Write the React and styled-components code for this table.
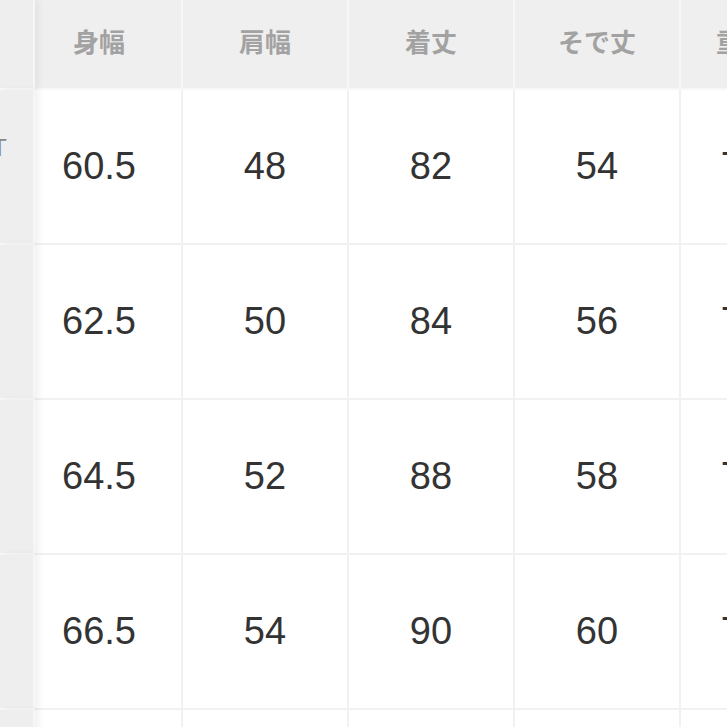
import React from 'react'
import styled, {createGlobalStyle} from 'styled-components'

const GlobalStyle = createGlobalStyle`
  html, body {
    margin: 0;
    padding: 0;
    background: #fff;
  }
  body {
    font-family: "Liberation Sans", "Noto Sans CJK JP", sans-serif;
  }
`

const columns = ['身幅', '肩幅', '着丈', 'そで丈', '重量']

const rows = [
  {label: 'T', values: ['60.5', '48', '82', '54', '72']},
  {label: '', values: ['62.5', '50', '84', '56', '74']},
  {label: '', values: ['64.5', '52', '88', '58', '76']},
  {label: '', values: ['66.5', '54', '90', '60', '78']},
  {label: '', values: ['', '', '', '', '']},
]

const App = () => {
  return (
    <>
      <GlobalStyle />
      <Frame>
        <Table>
          <SideHead />
          {columns.map((c, i) => (
            <HeadCell key={c} first={i === 0}>{c}</HeadCell>
          ))}
          {rows.map((r, ri) => (
            <React.Fragment key={ri}>
              <SideCell>{r.label && <SideLabel>{r.label}</SideLabel>}</SideCell>
              {r.values.map((v, i) => (
                <Cell key={i} first={i === 0}>{v}</Cell>
              ))}
            </React.Fragment>
          ))}
        </Table>
      </Frame>
    </>
  )
}

export default App


const Frame = styled.div`
  width: 727px;
  height: 727px;
  overflow: hidden;
  background: #fff;
`

const Table = styled.div`
  display: grid;
  grid-template-columns: 35px 148px 166px 166px 166px 124px;
  grid-template-rows: 90px repeat(5, 155px);
`

const SideHead = styled.div`
  position: relative;
  z-index: 2;
  background: #eeeeee;
  border-right: 2px solid #f6f6f6;
  border-bottom: 2px solid #f7f7f7;
  box-shadow: 4px 0 7px rgba(0, 0, 0, 0.05);
`

const SideCell = styled.div`
  position: relative;
  z-index: 2;
  background: #eeeeee;
  border-right: 2px solid #f6f6f6;
  border-bottom: 2px solid #f7f7f7;
  box-shadow: 4px 0 7px rgba(0, 0, 0, 0.06);
  display: flex;
  align-items: center;
  justify-content: flex-end;
  overflow: hidden;
  padding-right: 26px;
`

const SideLabel = styled.span`
  font-family: "Liberation Sans", sans-serif;
  font-size: 24px;
  color: #8a8a8a;
  margin-bottom: 38px;
  white-space: nowrap;
`

const HeadCell = styled.div`
  background: #efefef;
  border-right: 2px solid #f7f7f7;
  border-bottom: 2px solid #f7f7f7;
  display: flex;
  align-items: center;
  justify-content: center;
  padding-right: ${p => (p.first ? '18px' : '0')};
  padding-bottom: 8px;
  font-family: "Noto Sans CJK JP", sans-serif;
  font-weight: 700;
  font-size: 26px;
  color: #a2a2a2;
  white-space: nowrap;
  overflow: hidden;
`

const Cell = styled.div`
  background: #fff;
  border-right: 2px solid #f1f1f1;
  border-bottom: 2px solid #f1f1f1;
  display: flex;
  align-items: center;
  justify-content: center;
  padding-right: ${p => (p.first ? '18px' : '0')};
  font-family: "Liberation Sans", Arial, sans-serif;
  font-size: 38px;
  color: #333;
  white-space: nowrap;
  overflow: hidden;
`
